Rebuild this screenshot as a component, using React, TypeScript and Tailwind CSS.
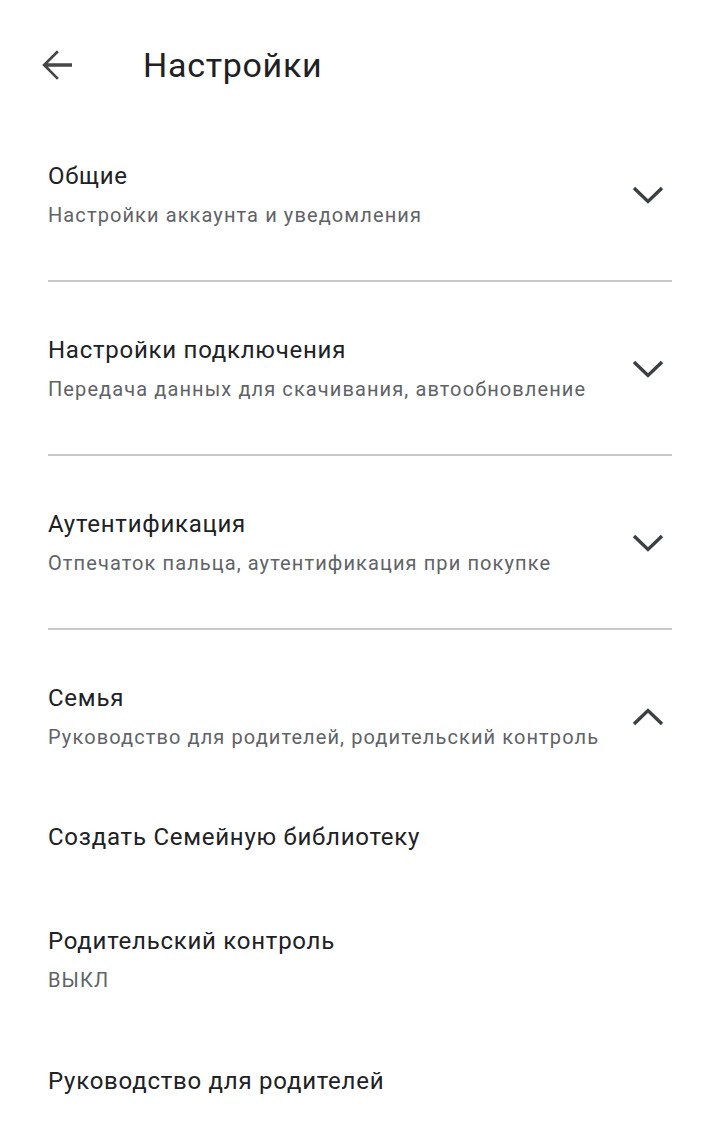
import React from 'react';

const font = { fontFamily: 'Roboto, "Noto Sans", "Liberation Sans", sans-serif' };

function BackArrow() {
  return (
    <svg width="48" height="48" viewBox="0 0 24 24" className="text-[#444746]" fill="currentColor">
      <path d="M20 11.1H7.9l5.5-5.5L12.5 4.6 5.1 12l7.4 7.4 0.9-0.9-5.5-5.6H20z" />
    </svg>
  );
}

function Chevron({ up }: { up?: boolean }) {
  return (
    <svg width="32" height="20" viewBox="0 0 32 20" className="text-[#3c4043]">
      <polyline
        points={up ? '2,17 16,3.5 30,17' : '2,3 16,16.5 30,3'}
        fill="none"
        stroke="currentColor"
        strokeWidth="3.4"
        strokeLinecap="butt"
        strokeLinejoin="miter"
      />
    </svg>
  );
}

interface SectionProps {
  title: string;
  subtitle: string;
  open?: boolean;
}

function Section({ title, subtitle, open }: SectionProps) {
  return (
    <div className={open ? 'flex items-center px-12 pt-[50px] pb-[31px]' : 'flex items-center px-12 pt-[50px] pb-[47px]'}>
      <div className="flex-1 min-w-0">
        <div className="text-[24px] leading-[36px] tracking-[0.75px] text-[#202124]">{title}</div>
        <div className="mt-[3px] text-[20px] leading-[36px] tracking-[1.1px] text-[#5f6368]">{subtitle}</div>
      </div>
      <div className="w-12 flex justify-center mt-[-2px]">
        <Chevron up={open} />
      </div>
    </div>
  );
}

function Divider() {
  return <div className="mx-12 h-[2px] bg-[#c8c8c8]" />;
}

export default function App() {
  return (
    <div className="w-[720px] min-h-[1135px] bg-white" style={font}>
      {/* Header */}
      <div className="h-[108px] flex items-start pt-[41px] pl-8">
        <div className="h-12 flex items-center">
          <BackArrow />
        </div>
        <div className="h-12 flex items-center ml-[63px] text-[34px] leading-[40px] tracking-[0.7px] text-[#202124]">
          Настройки
        </div>
      </div>

      <Section title="Общие" subtitle="Настройки аккаунта и уведомления" />
      <Divider />
      <Section title="Настройки подключения" subtitle="Передача данных для скачивания, автообновление" />
      <Divider />
      <Section title="Аутентификация" subtitle="Отпечаток пальца, аутентификация при покупке" />
      <Divider />
      <Section title="Семья" subtitle="Руководство для родителей, родительский контроль" open />

      <div className="px-12 py-[33px] text-[24px] leading-[36px] tracking-[0.75px] text-[#202124]">
        Создать Семейную библиотеку
      </div>
      <div className="px-12 pt-[35px] pb-[32px]">
        <div className="text-[24px] leading-[36px] tracking-[0.75px] text-[#202124]">Родительский контроль</div>
        <div className="mt-[3px] text-[20px] leading-[36px] tracking-[1.1px] text-[#5f6368]">ВЫКЛ</div>
      </div>
      <div className="px-12 pt-[33px] pb-[33px] text-[24px] leading-[36px] tracking-[0.75px] text-[#202124]">
        Руководство для родителей
      </div>
    </div>
  );
}
